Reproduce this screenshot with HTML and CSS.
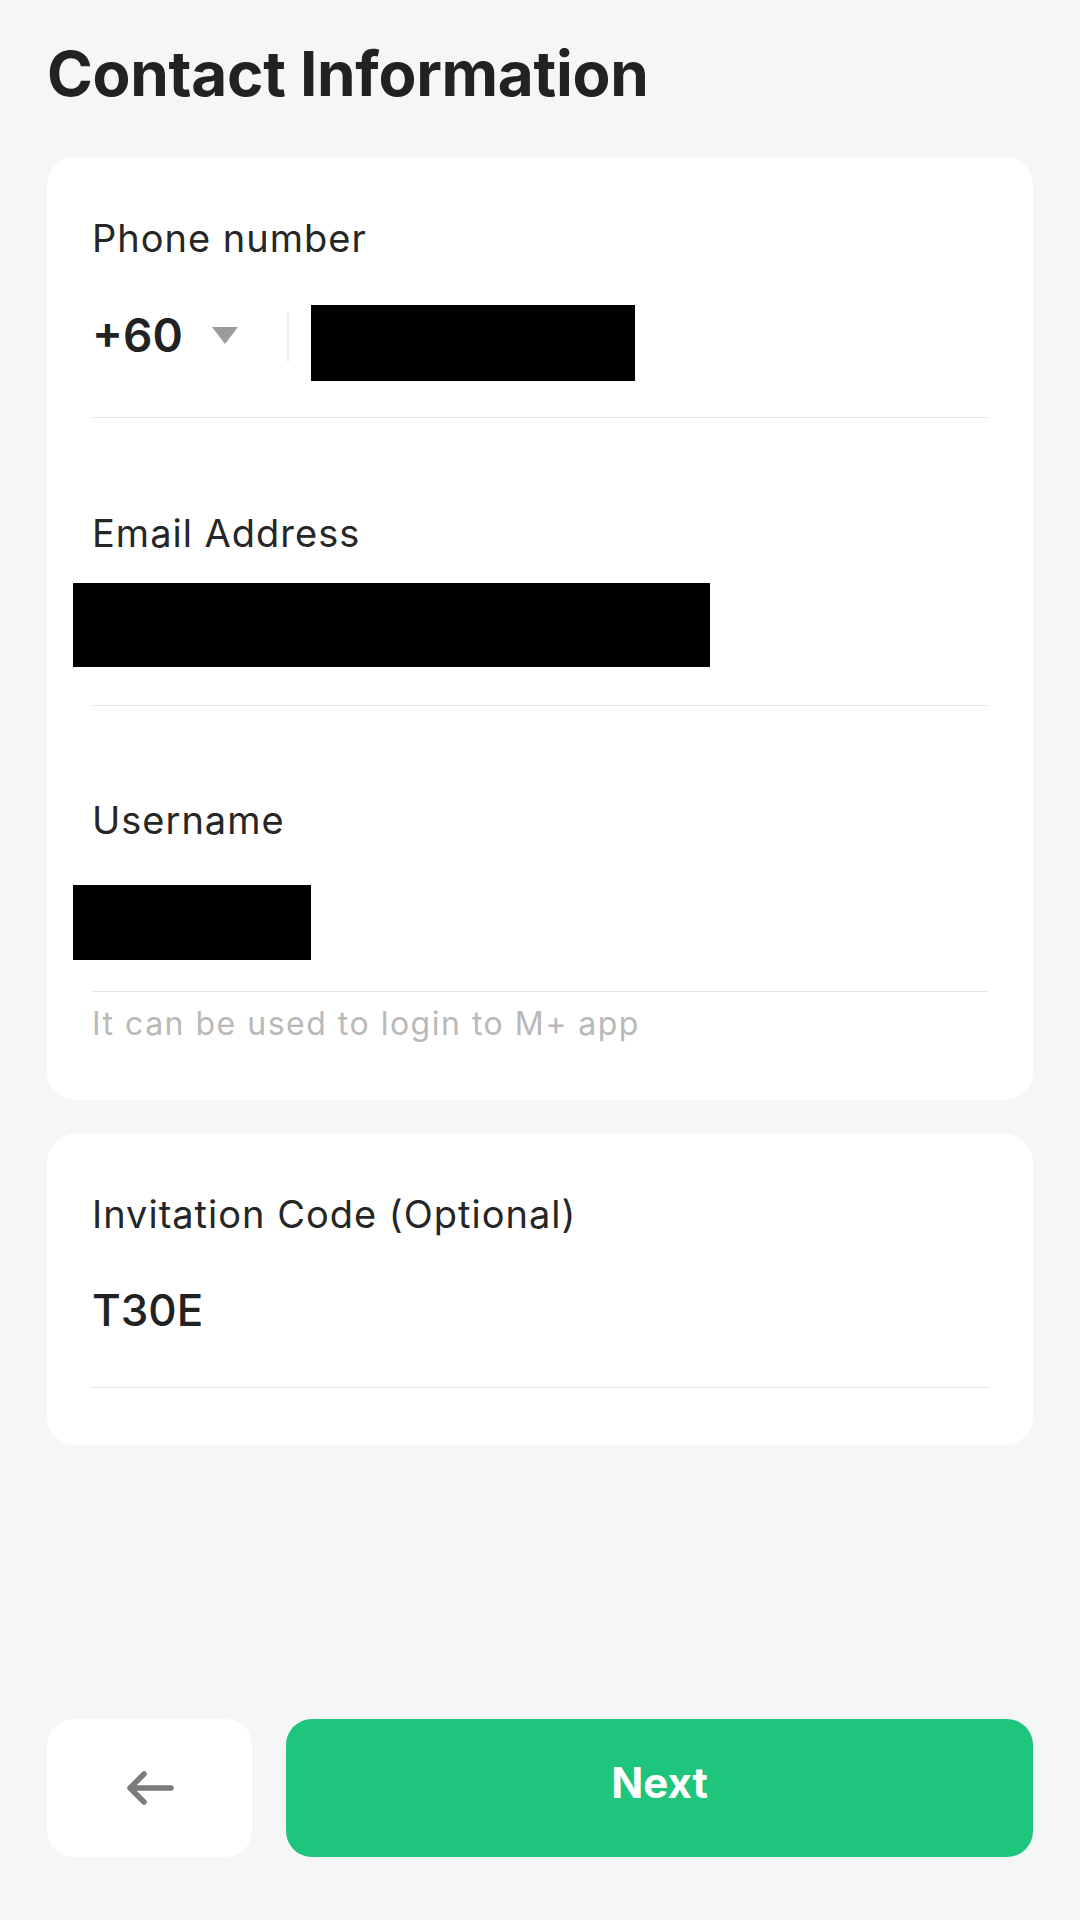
FILE: index.html
```html
<!DOCTYPE html>
<html>
<head lang="en">
<meta charset="UTF-8">
<title>Contact Information</title>
<link rel="stylesheet" href="styles.css">
</head>
<body>
  <div class="page">
    <h1 class="title">Contact Information</h1>

    <div class="card">
      <div class="field">
        <label class="label">Phone number</label>
        <div class="phone-row">
          <span class="code">+60</span>
          <span class="caret"></span>
          <span class="sep"></span>
          <span class="redact redact-phone"></span>
        </div>
        <div class="line line-phone"></div>
      </div>

      <div class="field field-email">
        <label class="label">Email Address</label>
        <span class="redact redact-email"></span>
        <div class="line line-email"></div>
      </div>

      <div class="field field-user">
        <label class="label">Username</label>
        <span class="redact redact-user"></span>
        <div class="line line-user"></div>
        <div class="hint">It can be used to login to M+ app</div>
      </div>
    </div>

    <div class="card card-invite">
      <div class="field">
        <label class="label">Invitation Code (Optional)</label>
        <div class="value">T30E</div>
        <div class="line line-invite"></div>
      </div>
    </div>

    <div class="actions">
      <button class="btn btn-back" type="button">
        <svg width="50" height="36" viewBox="0 0 50 36">
          <path d="M46 18H5M19 4L5 18L19 32" fill="none" stroke="#7b7b7b"
            stroke-width="5.5" stroke-linecap="round" stroke-linejoin="round"/>
        </svg>
      </button>
      <button class="btn btn-next" type="button">Next</button>
    </div>
  </div>
</body>
</html>
```

FILE: styles.css
```css
html, body {
margin: 0;
padding: 0;
}
body {
background: #f5f6f8;
color: #222;
font-family: Inter, "Noto Sans", sans-serif;
}
.page {
min-height: 1920px;
box-sizing: border-box;
padding: 0 47px 63px;
display: flex;
flex-direction: column;
}
.title {
margin: 38px 0 47px;
font-size: 62px;
line-height: 72px;
font-weight: 700;
letter-spacing: -0.3px;
color: #222;
}
.card {
background: #fff;
border-radius: 28px;
padding: 58px 45px 57px;
}
.card-invite {
margin-top: 34px;
padding-top: 57px;
}
.field { display: flex; flex-direction: column; }
.label {
display: block;
font-size: 38px;
line-height: 46px;
font-weight: 400;
letter-spacing: 1px;
color: #262626;
}
.line { height: 1px; background: #e4e4e4; }

/* phone */
.phone-row {
display: flex;
align-items: center;
margin-top: 44px;
height: 76px;
}
.code {
font-size: 46px;
line-height: 56px;
font-weight: 600;
color: #222;
margin-bottom: 16px;
}
.caret {
width: 0;
height: 0;
border-left: 13px solid transparent;
border-right: 13px solid transparent;
border-top: 17px solid #9b9b9b;
margin: 0 0 16px 29px;
}
.sep {
width: 2px;
height: 50px;
background: #efefef;
margin: 0 0 12px 49px;
}
.redact { display: block; background: #000; }
.redact-phone { width: 324px; height: 76px; margin-left: 22px; }
.line-phone { margin-top: 36px; }

/* email */
.field-email { margin-top: 92px; }
.redact-email { width: 637px; height: 84px; margin: 27px 0 0 -19px; }
.line-email { margin-top: 38px; }

/* username */
.field-user { margin-top: 91px; }
.redact-user { width: 238px; height: 75px; margin: 42px 0 0 -19px; }
.line-user { margin-top: 31px; }
.hint {
margin-top: 12px;
font-size: 32px;
line-height: 39px;
letter-spacing: 1.5px;
color: #b9b9b9;
}

/* invitation */
.value {
margin-top: 47px;
font-size: 44px;
line-height: 53px;
font-weight: 500;
color: #222;
}
.line-invite { margin-top: 50px; }

/* buttons */
.actions {
margin-top: auto;
display: flex;
gap: 34px;
}
.btn {
height: 138px;
border: none;
border-radius: 26px;
cursor: pointer;
font-family: Inter, "Noto Sans", sans-serif;
}
.btn-back {
width: 205px;
background: #fff;
display: flex;
align-items: center;
justify-content: center;
}
.btn-next {
flex: 1;
background: #1dc57d;
color: #fff;
font-size: 42px;
font-weight: 700;
padding: 0 0 12px;
}
```
